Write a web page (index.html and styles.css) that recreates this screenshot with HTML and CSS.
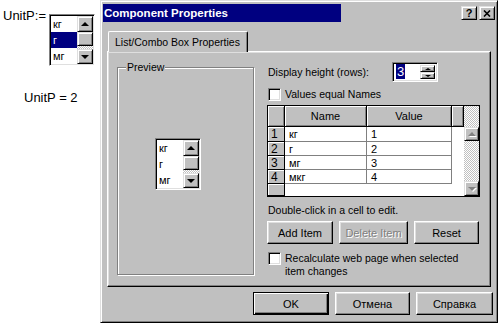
FILE: index.html
```html
<!DOCTYPE html>
<html lang="ru">
<head>
  <meta charset="UTF-8" />
  <title>Component Properties</title>
  <link rel="stylesheet" href="styles.css">
</head>
<body>

  <div class="sheet">
    <div class="worksheet">
      <div class="define">
        <span class="math">UnitP:=</span>
        <div class="listbox">
          <div class="lb-items">
            <div>кг</div>
            <div class="sel">г</div>
            <div>мг</div>
          </div>
          <div class="lb-scroll">
            <div class="raised sb-btn"><span class="tri up"></span></div>
            <div class="raised sb-thumb"></div>
            <div class="checker sb-track"></div>
            <div class="raised sb-btn down-btn"><span class="tri down"></span></div>
          </div>
        </div>
      </div>
      <div class="math result">UnitP = 2</div>
    </div>

    <div class="dialog">
      <div class="titlebar">
        <span class="title">Component Properties</span>
        <div class="tbtns">
          <span class="raised tbtn">?</span>
          <span class="raised tbtn">
            <svg width="8" height="7" viewBox="0 0 8 7"><path d="M1 0.5L7 6.5M7 0.5L1 6.5" stroke="#000" stroke-width="1.6"/></svg>
          </span>
        </div>
      </div>

      <div class="tabs">
        <div class="tab">List/Combo Box Properties</div>
      </div>

      <div class="tabpanel">
        <fieldset class="group">
          <legend>Preview</legend>
          <div class="listbox preview-lb">
            <div class="lb-items">
              <div>кг</div>
              <div>г</div>
              <div>мг</div>
            </div>
            <div class="lb-scroll">
              <div class="raised sb-btn"><span class="tri up"></span></div>
              <div class="raised sb-thumb"></div>
              <div class="checker sb-track"></div>
              <div class="raised sb-btn down-btn"><span class="tri down"></span></div>
            </div>
          </div>
        </fieldset>

        <div class="props">
          <div class="row-height">
            <span class="label">Display height (rows):</span>
            <div class="spin">
              <div class="spin-field"><span class="hl">3</span></div>
              <div class="spin-btns">
                <div class="raised sbtn"><span class="tri up small"></span></div>
                <div class="raised sbtn"><span class="tri down small"></span></div>
              </div>
            </div>
          </div>

          <div class="check">
            <span class="box"></span>
            <span>Values equal Names</span>
          </div>

          <div class="grid">
            <div class="cells">
              <div class="hd"></div>
              <div class="hd">Name</div>
              <div class="hd">Value</div>
              <div class="hd"></div>

              <div class="rn">1</div><div class="c">кг</div><div class="c">1</div><div class="blank"></div>
              <div class="rn">2</div><div class="c">г</div><div class="c">2</div><div class="blank"></div>
              <div class="rn">3</div><div class="c">мг</div><div class="c">3</div><div class="blank"></div>
              <div class="rn">4</div><div class="c">мкг</div><div class="c">4</div><div class="blank"></div>
              <div class="rn"></div><div class="blank wide"></div>
            </div>
            <div class="checker vscroll">
              <div class="vs-gap"></div>
              <div class="raised vs-btn vs-up"><span class="tri up dis"></span></div>
              <div class="vs-track"></div>
              <div class="raised vs-btn"><span class="tri down dis"></span></div>
            </div>
          </div>

          <p class="hint">Double-click in a cell to edit.</p>

          <div class="actions">
            <button class="btn add">Add Item</button>
            <button class="btn del" disabled>Delete Item</button>
            <button class="btn reset">Reset</button>
          </div>

          <div class="check multi">
            <span class="box"></span>
            <span>Recalculate web page when selected<br>item changes</span>
          </div>
        </div>
      </div>

      <div class="footer">
        <button class="btn default ok">OK</button>
        <button class="btn cancel">Отмена</button>
        <button class="btn help">Справка</button>
      </div>
    </div>
  </div>

</body>
</html>
```

FILE: styles.css
```css
* {
  box-sizing: border-box;
}
body {
  margin: 0;
  background: #fff;
  font-family: 'Liberation Sans', Arial, sans-serif;
  font-size: 10.5px;
  color: #000;
}

/* shared win98 bits */
.raised {
  background: #c0c0c0;
  border: 1px solid;
  border-color: #dfdfdf #000 #000 #dfdfdf;
  box-shadow: inset 1px 1px #fff, inset -1px -1px #808080;
}
.checker {
  background-color: #c0c0c0;
  background-image: conic-gradient(#fff 25%, #c0c0c0 0 50%, #fff 0 75%, #c0c0c0 0);
  background-size: 2px 2px;
}
.tri {
  width: 0;
  height: 0;
  border-left: 4px solid transparent;
  border-right: 4px solid transparent;
}
.tri.up { border-bottom: 4px solid #000; }
.tri.down { border-top: 4px solid #000; }
.tri.small {
  border-left-width: 3px;
  border-right-width: 3px;
}
.tri.up.small { border-bottom-width: 2px; }
.tri.down.small { border-top-width: 2px; }
.tri.dis {
  border-bottom-color: #808080;
  border-top-color: #808080;
  filter: drop-shadow(1px 1px 0 #fff);
}

.sheet {
  display: flex;
}

/* worksheet on the left */
.worksheet {
  width: 100px;
  flex: none;
}
.define {
  display: flex;
  align-items: flex-start;
  padding: 8px 0 0 3px;
}
.math {
  font-size: 13px;
  line-height: 15px;
}
.define .listbox {
  margin: 6px 0 0 3px;
}
.result {
  padding: 24px 0 0 24px;
}

.listbox {
  display: flex;
  width: 46px;
  height: 52px;
  padding: 1px;
  background: #fff;
  border: 1px solid;
  border-color: #808080 #fff #fff #808080;
  box-shadow: inset 1px 1px #000, inset -1px -1px #dfdfdf;
  font-size: 11px;
}
.lb-items {
  flex: 1;
}
.lb-items div {
  height: 16px;
  line-height: 16px;
  padding-left: 2px;
}
.lb-items .sel {
  background: #000080;
  color: #fff;
}
.lb-scroll {
  width: 16px;
  display: flex;
  flex-direction: column;
}
.sb-btn {
  height: 16px;
  display: flex;
  align-items: center;
  justify-content: center;
}
.sb-btn.down-btn {
  height: 15px;
}
.sb-thumb {
  height: 14px;
}
.sb-track {
  flex: 1;
}

/* dialog */
.dialog {
  width: 398px;
  background: #c0c0c0;
  border: 1px solid;
  border-color: #dfdfdf #000 #000 #dfdfdf;
  box-shadow: inset 1px 1px #fff, inset -1px -1px #808080;
  padding: 3px 2px 2px;
}
.titlebar {
  height: 18px;
  display: flex;
  align-items: center;
  justify-content: space-between;
  padding: 0 0 0 1px;
  background: linear-gradient(to right, #000080 238px, #c0c0c0 238px);
}
.title {
  color: #fff;
  font-weight: bold;
  font-size: 11.5px;
}
.tbtns {
  display: flex;
  gap: 2px;
}
.tbtn {
  width: 16px;
  height: 14px;
  display: flex;
  align-items: center;
  justify-content: center;
  font-weight: bold;
  font-size: 11px;
  line-height: 12px;
}

.tabs {
  margin-top: 9px;
  padding-left: 5px;
}
.tab {
  position: relative;
  width: 140px;
  height: 21px;
  margin-bottom: -1px;
  padding: 4px 0 0 6px;
  background: #c0c0c0;
  border: 1px solid;
  border-color: #fff #000 transparent #fff;
  border-bottom: none;
  border-radius: 2px 2px 0 0;
  box-shadow: inset -1px 0 #808080;
  font-size: 10.5px;
}

.tabpanel {
  display: flex;
  gap: 13px;
  margin: 0 4px;
  height: 236px;
  padding: 9px 8px 10px 9px;
  border: 1px solid;
  border-color: #fff #000 #000 #fff;
  box-shadow: inset -1px -1px #808080, inset 1px 1px #dfdfdf;
}

.group {
  margin: 0;
  padding: 0;
  min-width: 0;
  width: 137px;
  height: 214px;
  border: 1px solid #808080;
  box-shadow: 1px 1px #fff, inset 1px 1px #fff;
}
.group legend {
  margin-left: 8px;
  padding: 0 1px;
  line-height: 13px;
  background: #c0c0c0;
}
.preview-lb {
  margin: 64px 0 0 37px;
}

/* right column */
.props {
  width: 214px;
}
.row-height {
  display: flex;
  align-items: center;
  height: 20px;
  margin-top: 1px;
}
.label {
  width: 125px;
  padding-left: 1px;
}
.spin {
  display: flex;
  width: 46px;
  height: 20px;
  padding: 2px;
  background: #fff;
  border: 1px solid;
  border-color: #808080 #fff #fff #808080;
  box-shadow: inset 1px 1px #000, inset -1px -1px #dfdfdf;
}
.spin-field {
  flex: 1;
  padding-left: 1px;
  line-height: 14px;
}
.hl {
  background: #000080;
  color: #fff;
  padding: 0 1px;
  font-size: 13px;
}
.spin-btns {
  width: 15px;
  display: flex;
  flex-direction: column;
}
.sbtn {
  flex: 1;
  display: flex;
  align-items: center;
  justify-content: center;
}

.check {
  display: flex;
  align-items: flex-start;
  gap: 4px;
  margin-top: 6px;
  padding-left: 1px;
  line-height: 13px;
}
.box {
  flex: none;
  width: 13px;
  height: 13px;
  background: #fff;
  border: 1px solid;
  border-color: #808080 #fff #fff #808080;
  box-shadow: inset 1px 1px #000, inset -1px -1px #dfdfdf;
}

.grid {
  display: flex;
  width: 213px;
  height: 92px;
  margin-top: 4px;
  background: #fff;
  border: 1px solid #000;
}
.cells {
  display: grid;
  grid-template-columns: 17px 82px 85px 12px;
  grid-template-rows: 21px 15px 14px 14px 14px 12px;
  width: 196px;
}
.cells > div {
  display: flex;
  align-items: center;
}
.hd {
  justify-content: center;
  background: #c0c0c0;
  border-right: 1px solid #000;
  border-bottom: 1px solid #000;
  box-shadow: inset 1px 1px #fff, inset -1px -1px #808080;
  font-size: 11px;
}
.rn {
  padding-left: 3px;
  background: #c0c0c0;
  border-right: 1px solid #000;
  border-bottom: 1px solid #000;
  box-shadow: inset 1px 1px #fff;
  font-size: 12px;
}
.c {
  padding-left: 4px;
  border-right: 1px solid #808080;
  border-bottom: 1px solid #808080;
  font-size: 11px;
}
.blank.wide {
  grid-column: span 3;
}
.vscroll {
  width: 15px;
  display: flex;
  flex-direction: column;
}
.vs-gap {
  height: 21px;
}
.vs-btn {
  height: 15px;
  display: flex;
  align-items: center;
  justify-content: center;
}
.vs-up {
  height: 14px;
  border-bottom-color: #000;
}
.vs-track {
  flex: 1;
}

.hint {
  margin: 7px 0 0 1px;
  line-height: 13px;
}

.btn {
  height: 23px;
  padding: 0;
  font-family: 'Liberation Sans', Arial, sans-serif;
  font-size: 11px;
  color: #000;
  background: #c0c0c0;
  border: 1px solid;
  border-color: #fff #000 #000 #fff;
  box-shadow: inset -1px -1px #808080, inset 1px 1px #dfdfdf;
}
.btn:disabled {
  color: #808080;
  text-shadow: 1px 1px #fff;
}
.btn.default {
  border-color: #000;
  box-shadow: inset 1px 1px #fff, inset -1px -1px #000, inset -2px -2px #808080;
}
.actions {
  display: flex;
  gap: 6px;
  margin-top: 4px;
}
.add { width: 66px; }
.del { width: 69px; }
.reset { width: 65px; }

.check.multi {
  margin-top: 8px;
}

.footer {
  display: flex;
  justify-content: flex-end;
  gap: 6px;
  margin: 5px 2px 5px 0;
}
.ok { width: 76px; }
.cancel { width: 75px; }
.help { width: 77px; }
```
